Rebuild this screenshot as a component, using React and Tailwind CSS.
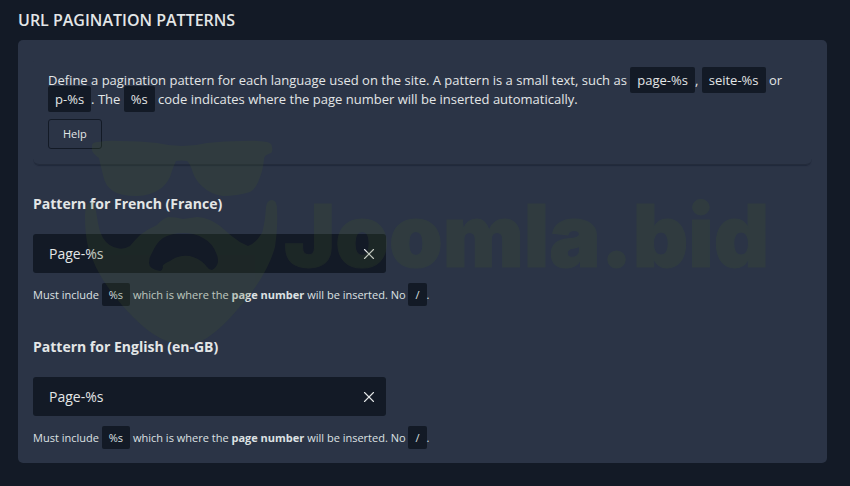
import React, { useState } from "react";
import { X } from "lucide-react";

const languages = [
  { id: "fr", label: "Pattern for French (France)" },
  { id: "en", label: "Pattern for English (en-GB)" },
];

function Code({ children }) {
  return (
    <code className="rounded-xs bg-[#131a26] px-[7px] py-1 font-['Open_Sans',sans-serif] whitespace-nowrap">
      {children}
    </code>
  );
}

function PatternField({ id, label }) {
  const [value, setValue] = useState("Page-%s");

  return (
    <div>
      <label htmlFor={id} className="block text-sm leading-5 font-bold">
        {label}
      </label>
      <div className="mt-5 flex h-[39px] max-w-[353px] items-center rounded-[3px] bg-[#131a26] pr-2">
        <input
          id={id}
          type="text"
          value={value}
          onChange={(e) => setValue(e.target.value)}
          className="min-w-0 flex-1 bg-transparent pl-4 text-sm outline-none"
        />
        <button type="button" aria-label="Clear" onClick={() => setValue("")}>
          <X size={18} strokeWidth={1.5} />
        </button>
      </div>
      <p className="mt-3 text-[11px] leading-5 text-[#dde1e3]">
        Must include <Code>%s</Code> which is where the <strong>page number</strong> will be
        inserted. No <Code>/</Code>.
      </p>
    </div>
  );
}

// Brand mark laid over the card
function Watermark() {
  return (
    <svg
      aria-hidden="true"
      viewBox="84 140 706 208"
      className="pointer-events-none absolute top-[100px] left-[66px] h-[208px] w-[706px]"
    >
      <g fill="#445a28" opacity="0.2">
        <path d="M92 145Q93 142 98 142Q108 140 120 141Q140 141 157 143Q170 146 182 146Q195 146 207 143Q224 141 242 141Q257 140 267 142Q272 143 272 147Q273 151 271 153Q264 155 264 159Q263 170 260 177Q256 189 250 192Q237 196 223 196Q210 194 203 187Q196 181 193 173Q190 163 187 161Q181 160 176 161Q173 167 170 177Q166 185 160 189Q150 196 137 196Q120 196 113 191Q105 186 103 175Q100 163 99 158Q92 153 92 150Z" />
        <path
          fillRule="evenodd"
          d="M91 202C86 204 85 211 85 217Q85 233 88 247Q93 264 103 280Q116 300 133 317Q148 332 160 338Q173 345 185 345Q197 344 207 338Q223 327 237 310Q250 296 260 280Q271 262 275 247Q278 226 277 210Q277 200 272 200Q267 200 266 207Q265 223 262 233Q255 244 248 246Q240 243 233 237C225 231 221 225 210 220Q203 217 197 217Q190 218 183 219Q176 217 168 217Q162 219 157 225Q148 229 140 235Q134 241 130 246Q123 250 117 248Q108 246 103 238Q99 231 98 223L95 205Q93 201 91 202ZM149 263Q149 257 152 253Q156 243 163 238Q172 233 183 233Q195 233 203 238Q213 243 217 255Q219 261 217 265Q215 269 212 270Q209 270 207 267Q202 260 193 257Q188 255 182 256Q175 257 170 261Q161 265 163 267Q162 271 160 271Q149 269 149 263Z"
        />
        <text
          x="284"
          y="267"
          stroke="#445a28"
          strokeWidth="1"
          className="font-['Inter',sans-serif] text-[86px] font-black"
        >
          Joomla.bid
        </text>
      </g>
    </svg>
  );
}

export default function App() {
  return (
    <main className="min-h-screen bg-[#131a26] pt-2.5 pr-[23px] pb-6 pl-[18px] font-['Open_Sans',sans-serif] text-[#e3e6e7]">
      <h1 className="text-base leading-5 font-semibold">URL PAGINATION PATTERNS</h1>

      <section className="relative mt-2.5 rounded-[5px] bg-[#2b3446] px-[15px] pt-4 pb-[15px]">
        <div className="rounded-md border-b border-[#232b3b] px-[15px] pt-[15px] pb-[15px] shadow-[0_2px_1px_-1px_#20283a]">
          <p className="text-[13px] leading-[19px]">
            Define a pagination pattern for each language used on the site. A pattern is a small
            text, such as <Code>page-%s</Code>, <Code>seite-%s</Code> or <Code>p-%s</Code>. The{" "}
            <Code>%s</Code> code indicates where the page number will be inserted automatically.
          </p>
          <button
            type="button"
            className="mt-2.5 h-[30px] rounded-[3px] border border-[#131a26] px-3.5 text-[11px]"
          >
            Help
          </button>
        </div>

        <div className="mt-[29px] flex flex-col gap-8">
          {languages.map((lang) => (
            <PatternField key={lang.id} id={lang.id} label={lang.label} />
          ))}
        </div>

        <Watermark />
      </section>
    </main>
  );
}
